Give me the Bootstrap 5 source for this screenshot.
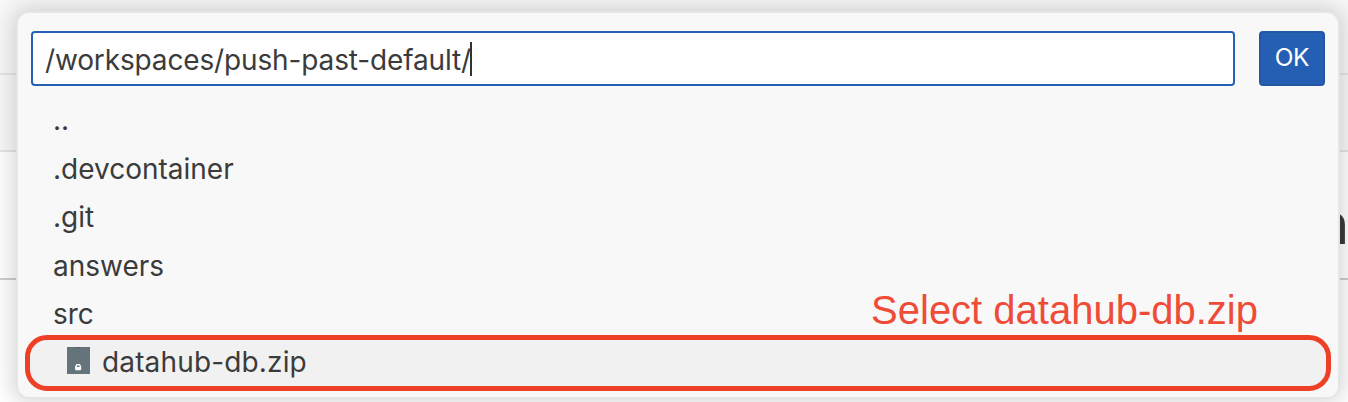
<!DOCTYPE html>
<html lang="en">
<head>
<meta charset="utf-8">
<meta name="viewport" content="width=device-width, initial-scale=1">
<title>Open File</title>
<link href="https://cdn.jsdelivr.net/npm/bootstrap@5.3.0/dist/css/bootstrap.min.css" rel="stylesheet">
<style>
  body { font-family: Inter, "Liberation Sans", sans-serif; color: #3b3b3b; background: #fff; height: 402px; }
  .strip { background: #f8f8f8; border-bottom: 2px solid #e5e5e5; }
  .strip-a { height: 75px; }
  .strip-b { height: 77px; }
  .doc { height: 128px; border-bottom: 2px solid #cecece; }
  .doc-word { font-size: 57px; line-height: 1; margin: 43px -1px 0 0; font-weight: 500; }
  .picker { top: 11px; left: 16px; width: 1324px; height: 388px; border: 2px solid #e5e5e5; border-radius: 13px; background: #f8f8f8; background-clip: padding-box; box-shadow: 0 0 22px 4px rgba(0,0,0,.16); }
  .picker-head { padding: 18px 13px 0; gap: 24px; }
  .path-box { height: 55px; border: 2px solid #2560b4; border-radius: 4px; background: #fff; padding: 1px 12px 0; font-size: 28px; letter-spacing: -.14px; }
  .path-text { padding-top: 1px; }
  .caret { width: 2px; height: 34px; background: #333; margin-left: -1px; }
  .ok-btn { width: 66px; height: 55px; border: 2px solid #2457a3; border-radius: 4px; background: #255fb3; color: #fff; font-size: 24.5px; line-height: 48px; padding: 0 0 3px; letter-spacing: -.3px; }
  .files { margin: 10px 7px 0; font-size: 28px; }
  .file-row { height: 48.6px; padding-left: 28px; line-height: 48px; }
  .file-picked { height: 56px; margin-top: -4px; border: 5px solid #ee4026; border-radius: 22px; background: #f1f1f1; padding: 0 0 2px 37px; letter-spacing: .15px; }
  .file-picked svg { margin: 0 12px 2px 0; }
  .note { right: 80px; top: 274px; font: 40px/46px "Liberation Sans", Arial, sans-serif; color: #ef4c38; }
</style>
</head>
<body class="position-relative overflow-hidden">
  <div class="strip strip-a"></div>
  <div class="strip strip-b"></div>
  <div class="doc d-flex justify-content-end"><div class="doc-word">n</div></div>

  <section class="picker position-absolute">
    <div class="picker-head d-flex">
      <div class="path-box flex-grow-1 d-flex align-items-center"><span class="path-text">/workspaces/push-past-default/</span><span class="caret"></span></div>
      <button type="button" class="btn ok-btn">OK</button>
    </div>
    <div class="files">
      <div class="file-row"><span>..</span></div>
      <div class="file-row"><span>.devcontainer</span></div>
      <div class="file-row"><span>.git</span></div>
      <div class="file-row"><span>answers</span></div>
      <div class="file-row"><span>src</span></div>
      <div class="file-picked d-flex align-items-center">
        <svg width="23" height="27" viewBox="0 0 23 27" aria-hidden="true">
          <path fill="#65737a" d="M0 0h23v27H0z"/>
          <path fill="#526069" d="M8 0h5v1H8z"/>
          <path fill="#fff" fill-rule="evenodd" d="M9.500 17h3.500l1.200 2.500v2.500q0 1.200-1.200 1.200H9.300q-1.200 0-1.200-1.200v-2.500zM9.800 18.500v1.500h2.700V18.500z"/>
        </svg>
        <span>datahub-db.zip</span>
      </div>
    </div>
    <div class="note position-absolute">Select datahub-db.zip</div>
  </section>
<script src="https://cdn.jsdelivr.net/npm/bootstrap@5.3.0/dist/js/bootstrap.bundle.min.js"></script>
</body>
</html>
